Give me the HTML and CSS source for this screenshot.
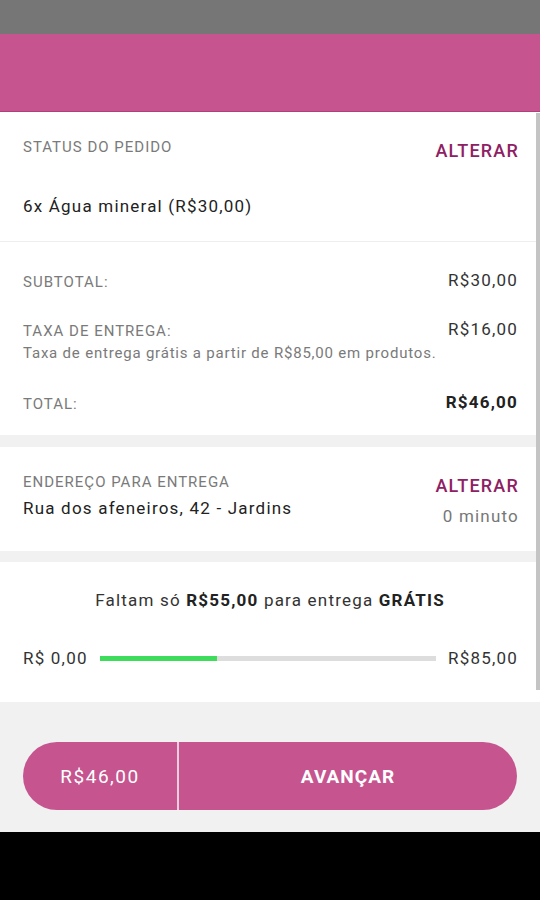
FILE: index.html
```html
<!DOCTYPE html>
<html>
<head>
<meta charset="utf-8">
<title>Pedido</title>
<link rel="stylesheet" href="styles.css">
</head>
<body>
<div class="page">
	<div class="statusBar"></div>
	<div class="appBar"></div>
	<div class="content">
		<div class="card order">
			<div class="row">
				<div class="label">STATUS DO PEDIDO</div>
				<a class="action">ALTERAR</a>
			</div>
			<div class="item">6x Água mineral (R$30,00)</div>
		</div>
		<div class="card totals">
			<div class="row">
				<div class="label">SUBTOTAL:</div>
				<div class="value">R$30,00</div>
			</div>
			<div class="row fee">
				<div class="label">TAXA DE ENTREGA:</div>
				<div class="value">R$16,00</div>
			</div>
			<div class="note">Taxa de entrega grátis a partir de R$85,00 em produtos.</div>
			<div class="row total">
				<div class="label">TOTAL:</div>
				<div class="value">R$46,00</div>
			</div>
		</div>
		<div class="card address">
			<div class="left">
				<div class="label">ENDEREÇO PARA ENTREGA</div>
				<div class="street">Rua dos afeneiros, 42 - Jardins</div>
			</div>
			<div class="right">
				<a class="action">ALTERAR</a>
				<div class="eta">0 minuto</div>
			</div>
		</div>
		<div class="card free">
			<div class="message">Faltam só <b>R$55,00</b> para entrega <b>GRÁTIS</b></div>
			<div class="progress">
				<span>R$ 0,00</span>
				<div class="track"><div class="fill" style="width:35%"></div></div>
				<span class="max">R$85,00</span>
			</div>
		</div>
		<div class="footer">
			<div class="checkout">
				<div class="price">R$46,00</div>
				<div class="next">AVANÇAR</div>
			</div>
		</div>
	</div>
	<div class="navBar"></div>
	<div class="scrollbar"></div>
</div>
</body>
</html>
```
FILE: styles.css
```css
html,body{
	padding:0;
	margin:0;
	font-family:"Roboto","Liberation Sans",sans-serif;
	background-color:#000000;
}
.page{
	position:relative;
	width:540px;
	height:900px;
	overflow:hidden;
	letter-spacing:1.2px;
}
.statusBar{
	height:34px;
	background-color:#767676;
}
.appBar{
	height:77px;
	background-color:#c5548f;
	border-bottom:1px solid #b23f7c;
}
.content{
	background-color:#f1f1f1;
}
.card{
	background-color:#ffffff;
	padding:0 23px;
}
.row{
	display:flex;
	justify-content:space-between;
	align-items:center;
}
.label{
	font-size:15px;
	line-height:20px;
	letter-spacing:1px;
	color:#7a7a7a;
}
.action{
	font-size:18px;
	line-height:22px;
	font-weight:500;
	letter-spacing:1.2px;
	margin-right:-2px;
	color:#8e2064;
}
.value{
	font-size:17px;
	line-height:24px;
	margin-right:-1px;
	color:#333333;
}
.order{
	padding-top:25px;
	padding-bottom:23px;
	border-bottom:1px solid #eeeeee;
}
.order .row{
	align-items:flex-start;
}
.order .action{
	margin-top:3px;
}
.item{
	margin-top:32px;
	font-size:17px;
	line-height:24px;
	color:#222222;
}
.totals{
	padding-top:26px;
	padding-bottom:21px;
}
.totals .label{
	padding-top:4px;
}
.fee{
	margin-top:25px;
}
.note{
	margin-top:2px;
	font-size:15px;
	line-height:20px;
	letter-spacing:0.8px;
	color:#7a7a7a;
}
.total{
	margin-top:27px;
}
.total .value{
	font-weight:700;
	color:#222222;
}
.address{
	margin-top:12px;
	padding-top:25px;
	padding-bottom:23px;
	display:flex;
	justify-content:space-between;
}
.street{
	margin-top:4px;
	font-size:17px;
	line-height:24px;
	color:#222222;
}
.right{
	margin-top:3px;
	margin-right:-2px;
	text-align:right;
}
.right .action{
	margin-right:0;
}
.eta{
	margin-top:7px;
	font-size:17px;
	line-height:24px;
	color:#777777;
}
.free{
	margin-top:11px;
	padding-top:26px;
	padding-bottom:32px;
}
.message{
	text-align:center;
	font-size:17px;
	line-height:24px;
	color:#333333;
}
.message b{
	color:#222222;
}
.progress{
	margin-top:34px;
	display:flex;
	align-items:center;
	gap:12px;
	font-size:17px;
	line-height:24px;
	color:#333333;
}
.progress .max{
	margin-right:-1px;
}
.track{
	flex:1;
	height:5px;
	background-color:#dddddd;
}
.fill{
	height:100%;
	background-color:#3ddc5a;
}
.footer{
	height:130px;
	padding:40px 23px 0 23px;
	box-sizing:border-box;
}
.checkout{
	display:flex;
	height:68px;
	border-radius:34px;
	overflow:hidden;
	background-color:#c5548f;
	color:#ffffff;
	font-size:19px;
}
.price{
	width:154px;
	display:flex;
	align-items:center;
	justify-content:center;
	letter-spacing:1.5px;
	border-right:2px solid #f2cde0;
}
.next{
	flex:1;
	display:flex;
	align-items:center;
	justify-content:center;
	font-weight:700;
	letter-spacing:1px;
}
.navBar{
	height:68px;
	background-color:#000000;
}
.scrollbar{
	position:absolute;
	right:0;
	top:113px;
	width:4px;
	height:577px;
	background-color:#c4c4c4;
}
```
